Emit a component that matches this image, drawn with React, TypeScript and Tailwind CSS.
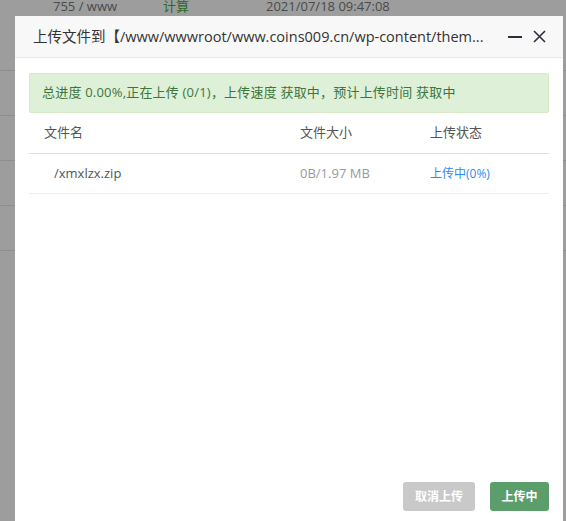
import React from "react";

const font = { fontFamily: '"Open Sans", "Noto Sans CJK SC", sans-serif' };

function BackdropRows() {
  // underlying file table, dimmed by the modal overlay
  return (
    <div className="absolute inset-0 bg-[#9d9d9d]">
      <div className="flex h-[13px] items-end text-[13px] leading-none text-[#4a4a4a]">
        <span className="ml-[53px] w-[110px]">755 / www</span>
        <span className="w-[103px] text-[#2a6a2a]">计算</span>
        <span>2021/07/18 09:47:08</span>
      </div>
      <div className="mt-[57px] flex flex-col">
        {[0, 1, 2, 3, 4].map((i) => (
          <div key={i} className="h-[45px] border-t border-[#8e8e8e]" />
        ))}
      </div>
    </div>
  );
}

export default function App() {
  return (
    <div
      className="relative h-[521px] w-[566px] overflow-hidden"
      style={font}
    >
      <BackdropRows />
      <div className="absolute left-[15px] top-[16px] flex h-[510px] w-[548px] flex-col bg-white">
        <div className="flex h-[42px] items-center border-b border-[#e9e9e9] bg-[#f8f8f8] pl-[18px] pr-[17px]">
          <span className="flex-1 truncate text-[14.5px] text-[#333]">
            上传文件到【/www/wwwroot/www.coins009.cn/wp-content/them...
          </span>
          <span className="ml-[20px] mt-[1px] h-[2px] w-[14px] bg-[#2e2e3a]" />
          <svg
            className="ml-[11px]"
            width="13"
            height="13"
            viewBox="0 0 13 13"
            fill="none"
            stroke="#2e2e3a"
            strokeWidth="1.6"
          >
            <path d="M1 1L12 12M12 1L1 12" />
          </svg>
        </div>
        <div className="flex flex-1 flex-col px-[14px] pb-[15px] pt-[15px]">
          <div className="flex h-[40px] items-center rounded-[2px] border border-[#d6e9c6] bg-[#dff0d8] pl-[12px] text-[13px] tracking-[0.2px] text-[#3c763d]">
            总进度 0.00%,正在上传 (0/1)，上传速度 获取中，预计上传时间 获取中
          </div>
          <div className="flex h-[41px] items-center border-b border-[#dddddd] text-[13px] text-[#555]">
            <span className="w-[271px] pl-[15px]">文件名</span>
            <span className="w-[130px]">文件大小</span>
            <span>上传状态</span>
          </div>
          <div className="flex h-[40px] items-center border-b border-[#eeeeee] text-[13px]">
            <span className="w-[271px] pl-[25px] text-[#555]">/xmxlzx.zip</span>
            <span className="w-[130px] text-[#999]">0B/1.97 MB</span>
            <span className="text-[12px] text-[#2d8cf0]">上传中(0%)</span>
          </div>
          <div className="mt-auto flex justify-end gap-[15px]">
            <button className="h-[29px] w-[72px] rounded-[3px] bg-[#c9c9c9] text-[12px] font-bold text-white">
              取消上传
            </button>
            <button className="h-[29px] w-[59px] rounded-[3px] bg-[#5b9e6c] text-[12px] font-bold text-white">
              上传中
            </button>
          </div>
        </div>
      </div>
    </div>
  );
}
